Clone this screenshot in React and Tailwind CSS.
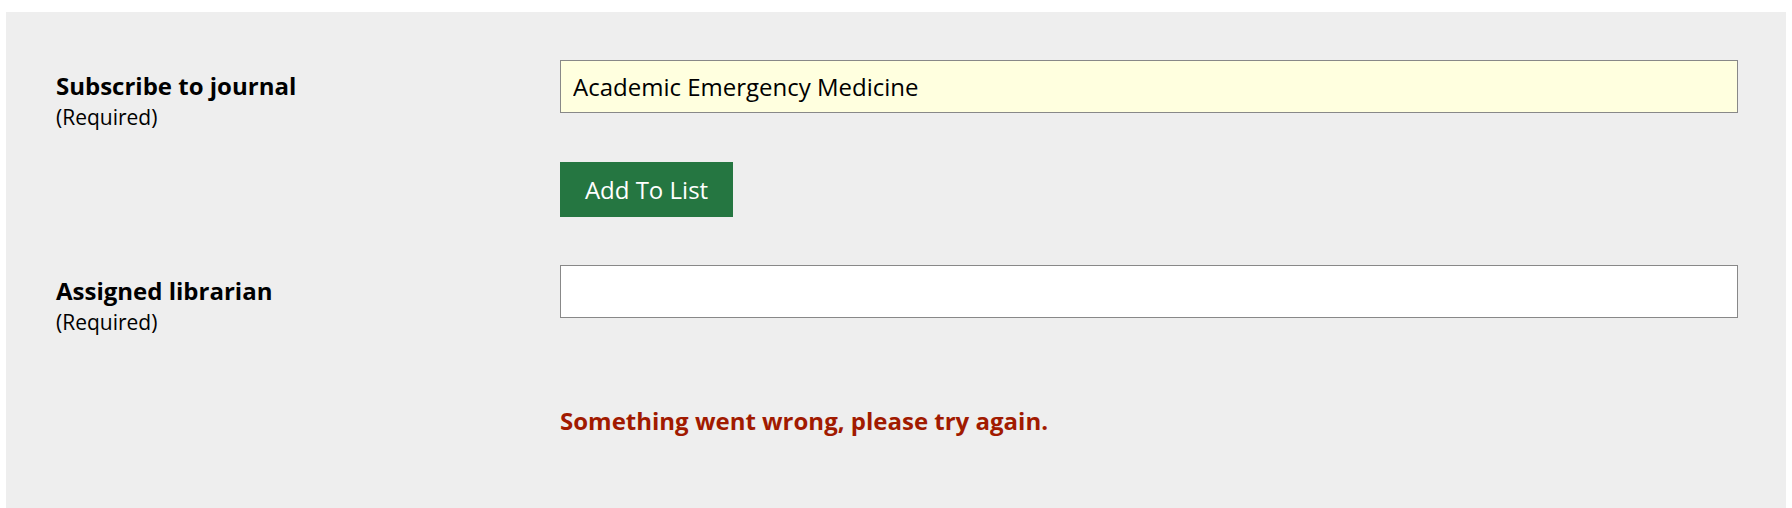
import React from 'react';

const Label = ({ title }) => (
  <div className="w-[554px] shrink-0 pl-[50px] pt-[9px]">
    <div className="text-[24px] leading-[34px] font-bold text-black">{title}</div>
    <div className="text-[21px] leading-[28px] text-black">(Required)</div>
  </div>
);

export default function App() {
  return (
    <div className="min-h-screen bg-white pt-[12px] px-[6px] font-['Open_Sans',sans-serif]">
      <div className="bg-[#eeeeee] h-[496px] pt-[48px] pr-[48px]">
        {/* Journal row */}
        <div className="flex">
          <Label title="Subscribe to journal" />
          <div className="flex-1 flex flex-col">
            <input
              type="text"
              readOnly
              value="Academic Emergency Medicine"
              className="h-[53px] w-full border border-[#888888] bg-[#ffffdf] px-[12px] text-[24px] text-black outline-none"
            />
            <div className="pt-[49px]">
              <button className="h-[55px] w-[173px] bg-[#257641] text-white text-[24px]">
                Add To List
              </button>
            </div>
          </div>
        </div>

        {/* Librarian row */}
        <div className="flex mt-[48px]">
          <Label title="Assigned librarian" />
          <div className="flex-1">
            <input
              type="text"
              readOnly
              value=""
              className="h-[53px] w-full border border-[#888888] bg-white px-[12px] text-[24px] outline-none"
            />
          </div>
        </div>

        {/* Error */}
        <div className="flex mt-[67px]">
          <div className="w-[554px] shrink-0" />
          <p className="text-[24px] leading-[36px] font-bold text-[#a11a00]">Something went wrong, please try again.</p>
        </div>
      </div>
    </div>
  );
}
